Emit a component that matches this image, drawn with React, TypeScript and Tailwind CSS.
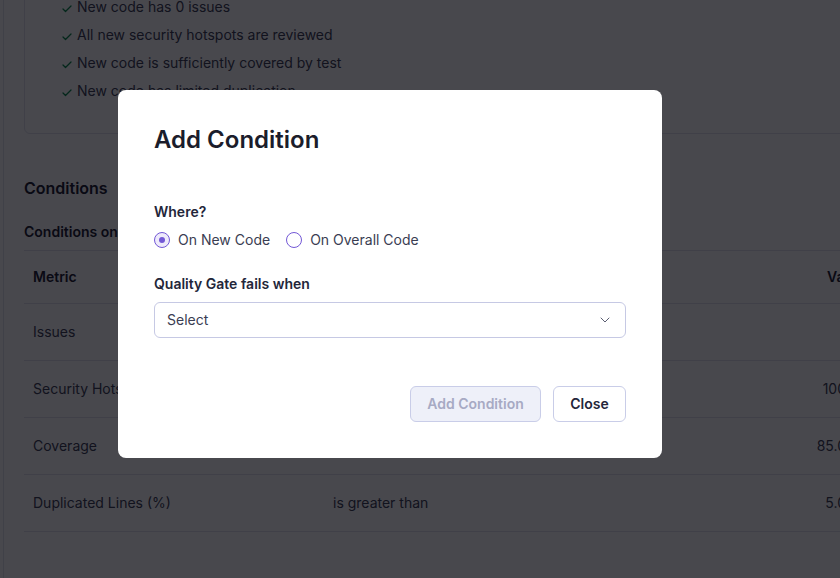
import { Check, ChevronDown } from "lucide-react";

const checks = [
  "New code has 0 issues",
  "All new security hotspots are reviewed",
  "New code is sufficiently covered by test",
  "New code has limited duplication",
];

const rows = [
  { metric: "Issues", op: "", value: "" },
  { metric: "Security Hotspots Reviewed", op: "is less than", value: "100" },
  { metric: "Coverage", op: "is less than", value: "85.0" },
  { metric: "Duplicated Lines (%)", op: "is greater than", value: "5.0" },
];

function Radio({ checked, label }: { checked?: boolean; label: string }) {
  return (
    <label className="flex items-center gap-2 text-sm text-[#3a3d52]">
      <span
        className={
          checked
            ? "w-4 h-4 rounded-full border border-[#7358d6] bg-[#eeeafb] flex items-center justify-center"
            : "w-4 h-4 rounded-full border border-[#7358d6] bg-white"
        }
      >
        {checked && <span className="w-[6px] h-[6px] rounded-full bg-[#7358d6]" />}
      </span>
      {label}
    </label>
  );
}

export default function App() {
  return (
    <div
      className="relative h-[578px] w-[840px] overflow-hidden bg-white"
      style={{ fontFamily: "Inter, 'Noto Sans', sans-serif" }}
    >
      <div className="flex h-full">
        <div className="w-[4px] shrink-0 border-r border-[#e2e4ec]" />
        <div className="flex-1 pl-[20px] -mt-[30px] min-w-[880px]">
          <div className="border border-[#e1e3ec] rounded-md pt-[26px] pb-[32px] pl-[36px] flex flex-col gap-2">
            {checks.map((c) => (
              <div key={c} className="flex items-center gap-[4px] text-sm leading-5 text-[#3e4357]">
                <Check className="w-[12px] h-[12px] mt-[3px] text-[#0b8a4c]" strokeWidth={2.5} />
                {c}
              </div>
            ))}
          </div>

          <h2 className="mt-[42px] text-base leading-6 font-semibold text-[#1f2233]">Conditions</h2>
          <h3 className="mt-[22px] text-sm leading-5 font-semibold text-[#1f2233]">
            Conditions on New Code
          </h3>

          <div className="mt-[8px] border-t border-[#e1e3ec] w-[822px]">
            <div className="flex items-center h-[53px] border-b border-[#e1e3ec] text-sm font-semibold text-[#1f2233]">
              <div className="w-[300px] pl-[9px]">Metric</div>
              <div className="flex-1 pl-[9px]">Operator</div>
              <div className="w-[100px] pl-[81px]">Value</div>
            </div>
            {rows.map((r) => (
              <div
                key={r.metric}
                className="flex items-center h-[57px] border-b border-[#e1e3ec] text-sm text-[#3e4357]"
              >
                <div className="w-[300px] pl-[9px]">{r.metric}</div>
                <div className="flex-1 pl-[9px]">{r.op}</div>
                <div className="w-[100px] text-right">{r.value}</div>
              </div>
            ))}
          </div>
        </div>
      </div>

      <div className="absolute inset-0 bg-[#020208]/[0.72]" />

      <div className="absolute left-[118px] top-[90px] w-[544px] h-[368px] bg-white rounded-lg p-9 flex flex-col">
        <h1 className="text-2xl leading-7 font-semibold text-[#1b1d2b]">Add Condition</h1>

        <div className="mt-12 text-sm leading-5 font-semibold text-[#23263a]">Where?</div>
        <div className="mt-2 flex items-center gap-4 h-5">
          <Radio checked label="On New Code" />
          <Radio label="On Overall Code" />
        </div>

        <div className="mt-6 text-sm leading-5 font-semibold text-[#23263a]">Quality Gate fails when</div>
        <button className="mt-2 h-9 w-full flex items-center justify-between px-3 border border-[#c6c9e4] rounded-md text-sm text-[#3a3d52]">
          Select
          <ChevronDown className="w-4 h-4 text-[#5b5e72]" strokeWidth={1.5} />
        </button>

        <div className="mt-12 flex justify-end gap-3">
          <button className="h-9 w-[131px] rounded-md border border-[#c9cde8] bg-[#eef0f9] text-sm font-semibold text-[#a7aac4]">
            Add Condition
          </button>
          <button className="h-9 w-[73px] rounded-md border border-[#c9cde8] bg-white text-sm font-semibold text-[#23263a]">
            Close
          </button>
        </div>
      </div>
    </div>
  );
}
